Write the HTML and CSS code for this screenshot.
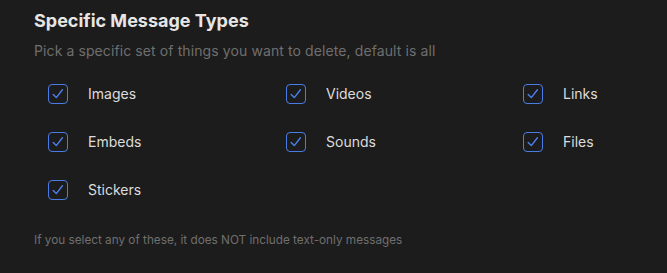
FILE: index.html
```html
<!DOCTYPE html>
<html>
<head>
<meta charset="utf-8">
<link rel="stylesheet" href="styles.css">
</head>
<body>
<div class="panel">
  <h1 class="title">Specific Message Types</h1>
  <p class="subtitle">Pick a specific set of things you want to delete, default is all</p>
  <div class="grid">
    <label class="opt"><span class="box"><svg viewBox="0 0 20 20" width="20" height="20"><path d="M5.2 10.6 L8.3 13.6 L14.4 5.8" fill="none" stroke="#4d7fea" stroke-width="1.4" stroke-linecap="round" stroke-linejoin="round"/></svg></span><span class="lbl">Images</span></label>
    <label class="opt"><span class="box"><svg viewBox="0 0 20 20" width="20" height="20"><path d="M5.2 10.6 L8.3 13.6 L14.4 5.8" fill="none" stroke="#4d7fea" stroke-width="1.4" stroke-linecap="round" stroke-linejoin="round"/></svg></span><span class="lbl">Videos</span></label>
    <label class="opt"><span class="box"><svg viewBox="0 0 20 20" width="20" height="20"><path d="M5.2 10.6 L8.3 13.6 L14.4 5.8" fill="none" stroke="#4d7fea" stroke-width="1.4" stroke-linecap="round" stroke-linejoin="round"/></svg></span><span class="lbl">Links</span></label>
    <label class="opt"><span class="box"><svg viewBox="0 0 20 20" width="20" height="20"><path d="M5.2 10.6 L8.3 13.6 L14.4 5.8" fill="none" stroke="#4d7fea" stroke-width="1.4" stroke-linecap="round" stroke-linejoin="round"/></svg></span><span class="lbl">Embeds</span></label>
    <label class="opt"><span class="box"><svg viewBox="0 0 20 20" width="20" height="20"><path d="M5.2 10.6 L8.3 13.6 L14.4 5.8" fill="none" stroke="#4d7fea" stroke-width="1.4" stroke-linecap="round" stroke-linejoin="round"/></svg></span><span class="lbl">Sounds</span></label>
    <label class="opt"><span class="box"><svg viewBox="0 0 20 20" width="20" height="20"><path d="M5.2 10.6 L8.3 13.6 L14.4 5.8" fill="none" stroke="#4d7fea" stroke-width="1.4" stroke-linecap="round" stroke-linejoin="round"/></svg></span><span class="lbl">Files</span></label>
    <label class="opt"><span class="box"><svg viewBox="0 0 20 20" width="20" height="20"><path d="M5.2 10.6 L8.3 13.6 L14.4 5.8" fill="none" stroke="#4d7fea" stroke-width="1.4" stroke-linecap="round" stroke-linejoin="round"/></svg></span><span class="lbl">Stickers</span></label>
  </div>
  <p class="note">If you select any of these, it does NOT include text-only messages</p>
</div>
</body>
</html>
```
FILE: styles.css
```css
html, body {
  margin: 0;
  padding: 0;
  background: #1c1c1c;
  width: 667px;
  height: 273px;
  overflow: hidden;
}
.panel {
  font-family: Inter, "Noto Sans", sans-serif;
  padding: 9px 0 0 34px;
}
.title {
  margin: 0;
  font-size: 18px;
  font-weight: 700;
  line-height: 24px;
  color: #e6e6e6;
}
.subtitle {
  margin: 8px 0 0 0;
  font-size: 14px;
  line-height: 20px;
  letter-spacing: 0.1px;
  color: #6f6f6f;
}
.grid {
  display: grid;
  grid-template-columns: 238px 237px 120px;
  grid-auto-rows: 20px;
  row-gap: 28px;
  margin: 23px 0 0 14px;
}
.opt {
  display: flex;
  align-items: center;
  gap: 20px;
  height: 20px;
}
.box {
  box-sizing: border-box;
  width: 20px;
  height: 20px;
  border: 1.5px solid #4a7be6;
  border-radius: 4px;
  position: relative;
  flex: none;
}
.box svg {
  position: absolute;
  left: -1.5px;
  top: -1.5px;
}
.lbl {
  font-size: 14px;
  line-height: 20px;
  color: #dcdcdc;
}
.note {
  margin: 32px 0 0 0;
  font-size: 11.75px;
  line-height: 16px;
  color: #6f6f6f;
}
```
